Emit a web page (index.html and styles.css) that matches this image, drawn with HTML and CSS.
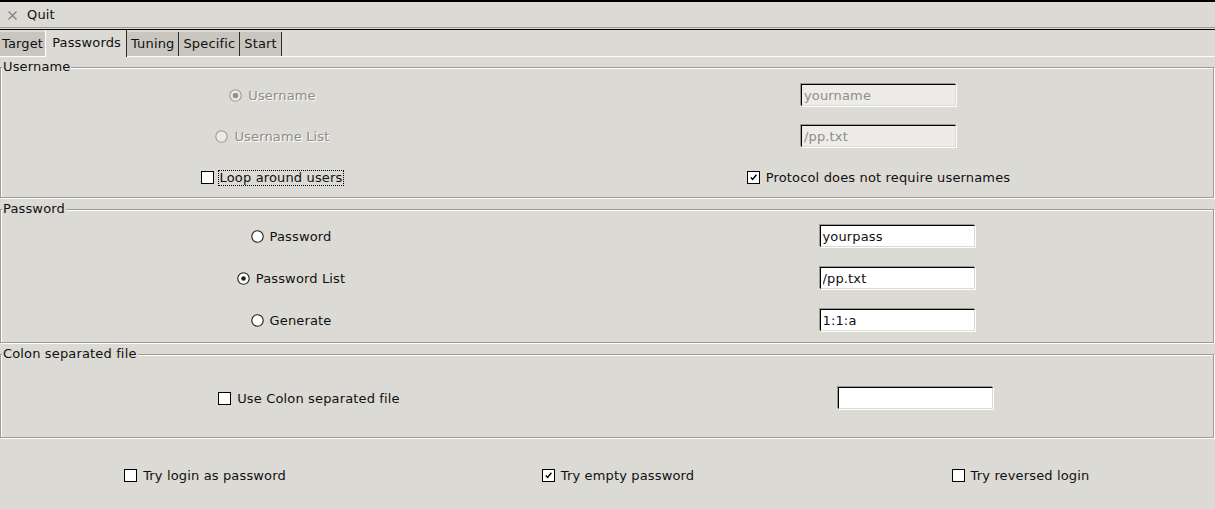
FILE: index.html
```html
<!DOCTYPE html>
<html lang="en">
<head>
  <meta charset="UTF-8" />
  <meta name="viewport" content="width=device-width, initial-scale=1.0"/>
  <title>xHydra - Passwords</title>
  <link rel="stylesheet" href="styles.css">
</head>
<body>
  <div class="toolbar">
    <button class="tool">
      <svg class="quit-icon" viewBox="0 0 9 9"><path d="M0.5 0.5 8.5 8.5M8.5 0.5 0.5 8.5"/></svg>
      Quit
    </button>
  </div>

  <div class="tabs">
    <span class="tab first">Target</span>
    <span class="tab active">Passwords</span>
    <span class="tab">Tuning</span>
    <span class="tab">Specific</span>
    <span class="tab">Start</span>
  </div>

  <div class="panel">
    <fieldset class="frame user">
      <legend>Username</legend>
      <div class="grid">
        <label class="opt off">
          <svg class="radio" viewBox="0 0 13 13"><circle cx="6.5" cy="6.5" r="5.7"/><circle class="dot" cx="6.5" cy="6.5" r="2.3"/></svg>Username
        </label>
        <input class="entry" type="text" value="yourname" disabled>

        <label class="opt off">
          <svg class="radio" viewBox="0 0 13 13"><circle cx="6.5" cy="6.5" r="5.7"/></svg>Username List
        </label>
        <input class="entry" type="text" value="/pp.txt" disabled>

        <label class="opt">
          <svg class="check" viewBox="0 0 13 13"><rect x="0.5" y="0.5" width="12" height="12"/></svg><span class="focus">Loop around users</span>
        </label>
        <label class="opt">
          <svg class="check" viewBox="0 0 13 13"><rect x="0.5" y="0.5" width="12" height="12"/><path d="M3.8 6.4 5.6 8.4 9.4 3.8"/></svg>Protocol does not require usernames
        </label>
      </div>
    </fieldset>

    <fieldset class="frame pass">
      <legend>Password</legend>
      <div class="grid">
        <label class="opt">
          <svg class="radio" viewBox="0 0 13 13"><circle cx="6.5" cy="6.5" r="5.7"/></svg>Password
        </label>
        <input class="entry" type="text" value="yourpass">

        <label class="opt">
          <svg class="radio" viewBox="0 0 13 13"><circle cx="6.5" cy="6.5" r="5.7"/><circle class="dot" cx="6.5" cy="6.5" r="2.3"/></svg>Password List
        </label>
        <input class="entry" type="text" value="/pp.txt">

        <label class="opt">
          <svg class="radio" viewBox="0 0 13 13"><circle cx="6.5" cy="6.5" r="5.7"/></svg>Generate
        </label>
        <input class="entry" type="text" value="1:1:a">
      </div>
    </fieldset>

    <fieldset class="frame colon">
      <legend>Colon separated file</legend>
      <div class="grid">
        <label class="opt">
          <svg class="check" viewBox="0 0 13 13"><rect x="0.5" y="0.5" width="12" height="12"/></svg>Use Colon separated file
        </label>
        <input class="entry" type="text" value="">
      </div>
    </fieldset>

    <div class="extra">
      <label class="opt">
        <svg class="check" viewBox="0 0 13 13"><rect x="0.5" y="0.5" width="12" height="12"/></svg>Try login as password
      </label>
      <label class="opt">
        <svg class="check" viewBox="0 0 13 13"><rect x="0.5" y="0.5" width="12" height="12"/><path d="M3.8 6.4 5.6 8.4 9.4 3.8"/></svg>Try empty password
      </label>
      <label class="opt">
        <svg class="check" viewBox="0 0 13 13"><rect x="0.5" y="0.5" width="12" height="12"/></svg>Try reversed login
      </label>
    </div>
  </div>
</body>
</html>
```

FILE: styles.css
```css
body {
  margin: 0;
  background: #dcdad5;
  font-family: "DejaVu Sans", sans-serif;
  font-size: 13px;
  line-height: 16px;
  letter-spacing: 0.15px;
  color: #101010;
}

/* toolbar */
.toolbar {
  box-sizing: border-box;
  height: 28px;
  padding: 1px 0 0 8px;
  border-top: 2px solid #000;
  border-bottom: 1px solid #9d9b96;
  display: flex;
  align-items: center;
}
.tool {
  display: flex;
  align-items: center;
  gap: 10px;
  background: none;
  border: 0;
  padding: 0;
  font: inherit;
  letter-spacing: inherit;
  color: inherit;
}
.quit-icon {
  width: 9px;
  height: 9px;
  stroke: #807e7a;
  stroke-width: 1.1;
}

/* notebook tabs */
.tabs {
  margin-top: 1px;
  border-top: 1px solid #000;
  height: 26px;
  display: flex;
  align-items: flex-end;
}
.tab {
  box-sizing: border-box;
  height: 24px;
  padding: 4px 4px 0;
  background: #c9c6c0;
  border-right: 1px solid #2e2d2b;
}
.tab.first {
  padding: 4px 2px 0;
  border-right: 0;
}
.tab.active {
  position: relative;
  z-index: 1;
  height: 27px;
  margin-bottom: -1px;
  padding: 5px 5px 0 6px;
  background: #dcdad5;
  border-left: 1px solid #fff;
}
.panel {
  border-top: 1px solid #fff;
}

/* frames */
.frame {
  margin: 0 1px 1px 0;
  padding: 0;
  min-width: 0;
  border: 1px solid #9d9b96;
  box-shadow: inset 1px 1px 0 #fff, 1px 1px 0 #fff;
}
.frame legend {
  margin-left: 1px;
  padding: 2px 1px 3px;
  line-height: 16px;
  background: #dcdad5;
}
.grid {
  display: grid;
  grid-auto-rows: 24px;
  align-items: center;
  justify-items: center;
}
.user .grid {
  grid-template-columns: 543px 1fr;
  row-gap: 17px;
  padding: 5px 0 8px;
}
.pass .grid {
  grid-template-columns: 580px 1fr;
  row-gap: 18px;
  padding: 4px 0 10px;
}
.colon .grid {
  grid-template-columns: 616px 1fr;
  padding: 21px 0 27px;
}
.extra {
  display: grid;
  grid-template-columns: 410px 416px 1fr;
  justify-items: center;
  align-items: center;
  height: 24px;
  padding-top: 24px;
}

/* options */
.opt {
  display: flex;
  align-items: center;
  padding-top: 2px;
  white-space: nowrap;
}
.radio, .check {
  flex: none;
  width: 13px;
  height: 13px;
  margin: -1px 6px 0 0;
}
.radio circle {
  fill: #fff;
  stroke: #1e1e1e;
  stroke-width: 1.1;
}
.radio .dot {
  fill: #1e1e1e;
  stroke: none;
}
.check rect {
  fill: #fff;
  stroke: #000;
}
.check path {
  fill: none;
  stroke: #000;
  stroke-width: 1.4;
}
.off {
  color: #8e8c87;
  text-shadow: 1px 1px 0 #fff;
}
.off .radio circle {
  fill: #eceae6;
  stroke: #9d9b96;
}
.off .radio .dot {
  fill: #8e8c87;
}
.focus {
  margin-left: -2px;
  padding: 0 1px;
  border: 1px dotted #000;
  line-height: 14px;
}

/* entries */
.entry {
  box-sizing: border-box;
  width: 155px;
  height: 22px;
  margin: 0;
  padding: 1px 2px 0;
  border: 1px solid;
  border-color: #000 #dcdad5 #dcdad5 #000;
  box-shadow: -1px -1px 0 #9d9b96, 1px 1px 0 #fff;
  background: #fff;
  font: inherit;
  letter-spacing: inherit;
  color: #101010;
  outline: none;
}
.entry:disabled {
  background: #eeece8;
  color: #8e8c87;
}
```
